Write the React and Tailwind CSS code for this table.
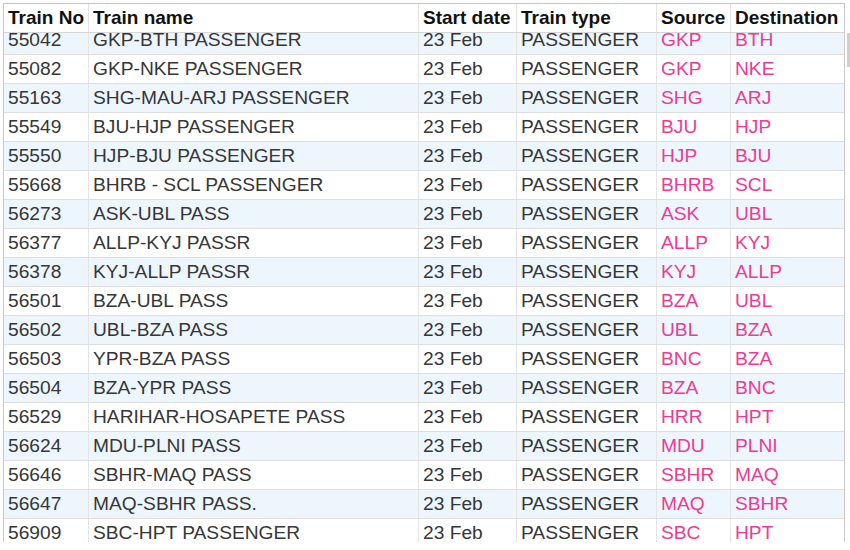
const trains = [
  ["55042", "GKP-BTH PASSENGER", "GKP", "BTH"],
  ["55082", "GKP-NKE PASSENGER", "GKP", "NKE"],
  ["55163", "SHG-MAU-ARJ PASSENGER", "SHG", "ARJ"],
  ["55549", "BJU-HJP PASSENGER", "BJU", "HJP"],
  ["55550", "HJP-BJU PASSENGER", "HJP", "BJU"],
  ["55668", "BHRB - SCL PASSENGER", "BHRB", "SCL"],
  ["56273", "ASK-UBL PASS", "ASK", "UBL"],
  ["56377", "ALLP-KYJ PASSR", "ALLP", "KYJ"],
  ["56378", "KYJ-ALLP PASSR", "KYJ", "ALLP"],
  ["56501", "BZA-UBL PASS", "BZA", "UBL"],
  ["56502", "UBL-BZA PASS", "UBL", "BZA"],
  ["56503", "YPR-BZA PASS", "BNC", "BZA"],
  ["56504", "BZA-YPR PASS", "BZA", "BNC"],
  ["56529", "HARIHAR-HOSAPETE PASS", "HRR", "HPT"],
  ["56624", "MDU-PLNI PASS", "MDU", "PLNI"],
  ["56646", "SBHR-MAQ PASS", "SBHR", "MAQ"],
  ["56647", "MAQ-SBHR PASS.", "MAQ", "SBHR"],
  ["56909", "SBC-HPT PASSENGER", "SBC", "HPT"],
];

const HeadCell = ({ className, children }) => (
  <div className={`${className} pl-[4px] flex items-center border-r border-[#e2e2e2]`}>
    {children}
  </div>
);

const Cell = ({ className, children }) => (
  <div className={`${className} pl-[4px] flex items-center border-r border-[#e4e4e4]`}>
    {children}
  </div>
);

export default function App() {
  return (
    <div
      className="w-[850px] h-[550px] bg-white relative overflow-hidden"
      style={{ fontFamily: '"Liberation Sans", Arial, sans-serif' }}
    >
      <div className="ml-[3px] mt-[3px] w-[842px] h-[539px] border-l border-t border-r border-[#c9c9c9] overflow-hidden flex flex-col">
        {/* header */}
        <div className="flex h-[29px] shrink-0 border-b border-[#d6d6d6] bg-white text-[19px] font-bold text-[#111]">
          <HeadCell className="w-[85px]">Train No</HeadCell>
          <HeadCell className="w-[330px]">Train name</HeadCell>
          <HeadCell className="w-[98px]">Start date</HeadCell>
          <HeadCell className="w-[140px]">Train type</HeadCell>
          <HeadCell className="w-[74px]">Source</HeadCell>
          <div className="flex-1 pl-[4px] flex items-center">Destination</div>
        </div>

        {/* body */}
        <div className="flex-1 overflow-hidden">
          <div className="-mt-[7px]">
            {trains.map(([no, name, src, dst], i) => (
              <div
                key={no}
                className={`flex h-[29px] border-b border-[#dedede] text-[19.2px] text-[#363636] ${
                  i % 2 === 0 ? "bg-[#eef6fd]" : "bg-white"
                }`}
              >
                <Cell className="w-[85px]">{no}</Cell>
                <Cell className="w-[330px]">{name}</Cell>
                <Cell className="w-[98px]">23 Feb</Cell>
                <Cell className="w-[140px]">PASSENGER</Cell>
                <Cell className="w-[74px] text-[#ee3a95]">{src}</Cell>
                <div className="flex-1 pl-[4px] flex items-center text-[#ee3a95]">{dst}</div>
              </div>
            ))}
          </div>
        </div>
      </div>

      {/* scrollbar thumb */}
      <div className="absolute right-0 top-[33px] w-[3px] h-[34px] bg-[#cfcfcf]" />
    </div>
  );
}
